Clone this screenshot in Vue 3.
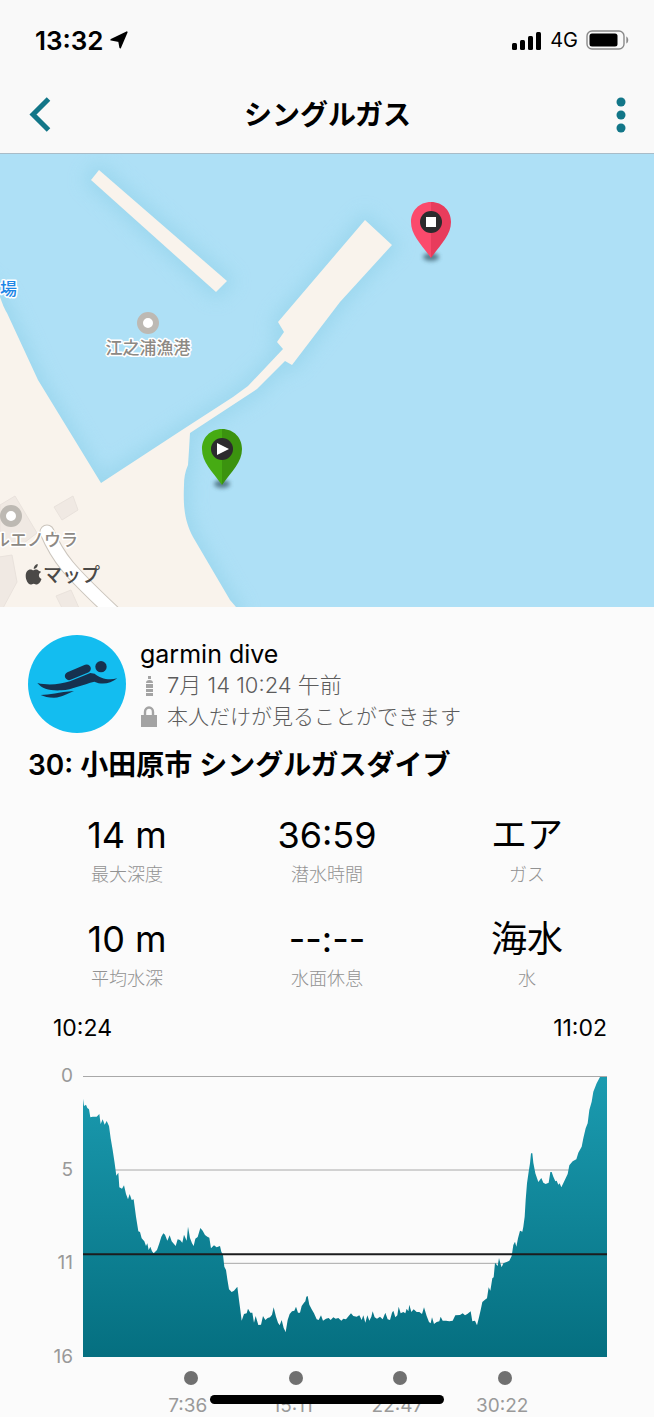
<script setup>
const stats = [
  { value: '14 m', label: '最大深度' },
  { value: '36:59', label: '潜水時間' },
  { value: 'エア', label: 'ガス' },
  { value: '10 m', label: '平均水深' },
  { value: '--:--', label: '水面休息' },
  { value: '海水', label: '水' },
]

const depthTicks = ['0', '5', '11', '16']
const timeTicks = ['7:36', '15:11', '22:47', '30:22']

const pins = [
  { id: 'end', x: 431, y: 222, light: '#fb4a6c', dark: '#e83c5c' },
  { id: 'start', x: 222, y: 449, light: '#46ab13', dark: '#3b930f' },
]

// Depth profile, surface at 0 and the 16 m line at 843.
const profile = `0,68 3,90 9,86 13,96 18,100 22,124 29,122 41,122 49,114 53,144 59,130 65,146 71,135 78,150 83,187
89,222 95,262 100,299 106,290 109,334 117,338 123,328 129,354 135,370 140,354 146,372 152,370 159,422 166,466
171,468 176,487 184,496 189,510 193,502 197,522 202,512 207,526 212,532 222,522 229,502 235,482 241,472 246,476
253,494 260,478 266,496 273,504 278,510 284,490 291,492 298,500 303,476 311,494 315,452 321,486 327,502 332,510
337,488 344,483 352,456 359,464 366,477 373,482 379,485 384,517 393,508 401,514 411,510 415,527 420,537 424,572
429,582 433,610 438,640 446,648 453,644 463,632 468,672 472,702 476,734 483,714 491,712 495,698 502,710 508,710
513,740 518,720 526,747 534,746 540,720 547,732 554,726 561,724 567,716 572,694 579,722 585,740 590,748 596,732
602,756 608,768 614,732 620,714 627,706 634,704 639,692 645,710 651,710 656,690 663,680 667,676 670,662 674,660
679,686 686,700 693,712 701,730 707,732 714,718 720,734 729,728 737,726 743,732 751,724 758,728 766,726 775,734
781,728 789,730 797,720 804,712 811,720 821,722 829,718 836,732 841,718 847,740 853,718 859,734 865,722 869,706
875,724 882,728 891,722 899,730 907,710 914,730 921,732 927,710 931,704 937,724 943,718 947,692 953,712 961,708
967,712 971,698 976,706 979,686 985,708 992,700 1001,708 1009,708 1017,714 1023,694 1031,720 1038,738 1043,742
1047,724 1053,744 1061,738 1069,736 1073,722 1079,734 1089,734 1099,736 1109,734 1117,718 1131,717 1139,712
1146,718 1153,714 1163,706 1168,736 1176,734 1182,748 1188,724 1193,702 1198,678 1205,672 1212,667 1217,634
1222,644 1228,607 1232,604 1236,560 1244,570 1248,546 1252,562 1256,574 1261,562 1271,558 1279,554 1286,540
1291,507 1296,497 1300,512 1305,487 1311,464 1318,467 1321,452 1325,422 1328,372 1332,322 1337,287 1341,262
1344,232 1348,232 1351,260 1357,292 1366,318 1375,306 1381,320 1388,324 1397,320 1402,288 1406,288 1411,302
1417,316 1421,314 1426,326 1430,322 1435,334 1443,317 1454,294 1459,268 1469,256 1480,250 1486,230 1496,212
1501,187 1508,157 1514,142 1519,102 1526,77 1531,47 1541,22 1551,3 1572,3 1572,843 0,843`
</script>

<template>
  <div class="screen">
    <header class="top">
      <div class="status">
        <span class="clock">13:32</span>
        <svg class="locate" viewBox="0 0 18 18" aria-hidden="true"><path d="M1.200 8.800 16.800 1.200 10.200 16.600 9 10.200Z" stroke="#000" stroke-width="1.600" stroke-linejoin="round" /></svg>
        <div class="radio">
          <svg class="signal" viewBox="0 0 30 19" aria-hidden="true">
            <rect x="0" y="12" width="5" height="7" rx="1.5" />
            <rect x="8" y="9" width="5" height="10" rx="1.5" />
            <rect x="16" y="5" width="5" height="14" rx="1.5" />
            <rect x="24" y="1" width="5" height="18" rx="1.5" />
          </svg>
          <span class="network">4G</span>
          <svg class="battery" viewBox="0 0 43 20" aria-hidden="true">
            <rect x="1" y="1" width="37" height="18" rx="5" fill="none" stroke="#8a8a8a" stroke-width="1.4" />
            <rect x="3.5" y="3.5" width="28" height="13" rx="2.5" />
            <path d="M40.3 6.5c2.6 1 2.6 6 0 7z" fill="#8a8a8a" />
          </svg>
        </div>
      </div>
      <nav class="bar">
        <button class="back" type="button" aria-label="戻る">
          <svg viewBox="0 0 22 36"><path d="M19.5 2 4 17.6 19.5 33" fill="none" stroke="#127688" stroke-width="5" /></svg>
        </button>
        <h1>シングルガス</h1>
        <button class="more" type="button" aria-label="メニュー">
          <svg viewBox="0 0 10 36" fill="#127688"><circle cx="5" cy="5" r="4.5" /><circle cx="5" cy="18" r="4.5" /><circle cx="5" cy="31" r="4.5" /></svg>
        </button>
      </nav>
    </header>

    <svg class="map" viewBox="0 154 654 453" preserveAspectRatio="xMidYMid slice" role="img" aria-label="マップ">
      <defs>
        <filter id="shore" x="-20%" y="-20%" width="140%" height="140%"><feGaussianBlur stdDeviation="9" /></filter>
        <filter id="soft" x="-50%" y="-100%" width="200%" height="300%"><feGaussianBlur stdDeviation="2" /></filter>
        <g id="land">
          <path d="M-20 280 0 297C3 305 4 308 7 313L38 380 101 483 182 430 233 397 248 386 283 349 277 342 284 332 278 322 365 220 392 245 340 302 292 365 285 361 257 389 190 433 189 450 188 465Q184 474 184 485C183 508 185 522 193 537L230 600 236 607 236 630-20 630Z" />
          <path d="M99 170 91 180 216 292 227 281Z" />
        </g>
      </defs>
      <rect x="-400" y="154" width="1500" height="453" fill="#aee0f6" />
      <use href="#land" fill="#98d5ec" stroke="#98d5ec" stroke-width="12" filter="url(#shore)" opacity="0.8" />
      <use href="#land" fill="#f9f3ec" />

      <g fill="#f0e9e3" stroke="#e9e2dc" stroke-width="1">
        <path d="M0 505 15 496 37 533 20 546 0 540Z" />
        <path d="M54 507 73 496 78 510 62 520Z" />
        <path d="M-1 557 12 555 17 582 3 608-1 608Z" />
        <path d="M56 596 71 590 79 608 62 608Z" />
      </g>
      <g fill="none" stroke-linecap="round">
        <path d="M47 532C58 558 68 570 115 614" stroke="#cbc5bd" stroke-width="15" />
        <path d="M47 532C58 558 68 570 115 614" stroke="#fff" stroke-width="13" />
      </g>

      <g class="ring">
        <circle cx="148" cy="323" r="8" />
        <circle cx="11" cy="516" r="8" />
      </g>
      <g class="place">
        <text x="148" y="354" text-anchor="middle">江之浦漁港</text>
        <text x="78" y="546" text-anchor="end">ルエノウラ</text>
        <text class="blue" x="0" y="295">場</text>
      </g>
      <g fill="#4b4947">
        <path d="M39 571c-1.500-1.600-3.300-1.700-4.900-1-.7.300-1.100.3-1.800 0-3.200-1.500-6.600.8-6.600 6 0 3.700 2.400 8.500 4.900 8.500 1.200 0 1.700-.8 3.100-.8s1.800.8 3.100.8c2.300 0 4-3.200 4.700-5.400-3.300-1.500-3.400-5.500-.4-7-.6-.6-1.300-1-2.100-1.100Z" />
        <path d="M33.700 569c-.2-2.700 1.700-4.500 4-5 .3 2.700-1.800 4.700-4 5Z" />
        <text class="credit" x="43" y="582">マップ</text>
      </g>

      <g v-for="pin in pins" :key="pin.id" :transform="`translate(${pin.x} ${pin.y})`">
        <ellipse cx="0" cy="35" rx="8" ry="4" fill="#3f6472" opacity="0.8" filter="url(#soft)" />
        <path :fill="pin.light" d="M0-20C-12-20-20-11-20 0-20 13-10 22 0 36Z" />
        <path :fill="pin.dark" d="M0-20C12-20 20-11 20 0 20 13 10 22 0 36Z" />
        <circle r="11" fill="#2c2b2d" />
        <rect v-if="pin.id === 'end'" x="-5" y="-5" width="10" height="10" fill="#fff" />
        <path v-else d="M-5-6 7 0-5 6Z" fill="#fff" />
      </g>
    </svg>

    <main>
      <section class="profile">
        <svg class="avatar" viewBox="84 60 294 294" aria-hidden="true">
          <circle cx="231" cy="207" r="147" fill="#13bdf0" />
          <g fill="#16314f">
            <path d="M112 204C145 212 180 208 210 199L271 174 284 176C300 190 325 197 352 190 330 207 305 210 283 200 250 208 215 224 185 226 150 228 127 222 112 204Z" />
            <path d="M122 240C150 240 175 231 222 228 203 235 188 247 162 248 145 248 132 245 122 240Z" />
            <path d="M207 183 260 161" stroke="#16314f" stroke-width="25" stroke-linecap="round" />
            <circle cx="303" cy="155" r="17" />
          </g>
        </svg>
        <div class="who">
          <p class="name">garmin dive</p>
          <p class="meta date">
            <svg viewBox="0 0 18 24" fill="#a3a3a3" aria-hidden="true"><path d="M8 2h3v3H8zM6 9q0-3 3.500-3T13 9zM6 10h7v4H6zM6 15h7v3H6zM6 19h7v3H6z" /></svg>
            <span>7月 14 10:24 午前</span>
          </p>
          <p class="meta">
            <svg viewBox="0 0 18 24" aria-hidden="true"><path d="M5 11V7a4 4.500 0 0 1 8 0v4" fill="none" stroke="#a3a3a3" stroke-width="2.400" /><rect x="1" y="10" width="16" height="12" fill="#a3a3a3" /></svg>
            <span>本人だけが見ることができます</span>
          </p>
        </div>
      </section>

      <h2>30: 小田原市 シングルガスダイブ</h2>

      <dl class="stats">
        <div v-for="s in stats" :key="s.label">
          <dd>{{ s.value }}</dd>
          <dt>{{ s.label }}</dt>
        </div>
      </dl>

      <section class="chart">
        <div class="span"><span>10:24</span><span>11:02</span></div>
        <div class="plot">
          <ul class="depths"><li v-for="d in depthTicks" :key="d">{{ d }}</li></ul>
          <svg class="graph" viewBox="0 0 1572 843" preserveAspectRatio="none" role="img" aria-label="深度グラフ">
            <defs>
              <linearGradient id="water" x1="0" y1="0" x2="0" y2="1">
                <stop offset="0" stop-color="#1b9bb0" />
                <stop offset="1" stop-color="#056f80" />
              </linearGradient>
            </defs>
            <path d="M0 1.500H1572M0 282H1572M0 562H1572" class="rule" />
            <polygon :points="profile" fill="url(#water)" />
            <path d="M0 535H1572" class="average" />
          </svg>
          <ul class="times">
            <li v-for="t in timeTicks" :key="t"><i class="dot"></i>{{ t }}</li>
          </ul>
        </div>
      </section>
    </main>
    <div class="home"></div>
  </div>
</template>

<style>
body {
  background: #fbfbfb;
}
</style>

<style scoped>
.screen {
  position: relative;
  overflow: hidden;
  font-family: Inter, "Noto Sans CJK JP", sans-serif;
  color: #000;
  background: #fbfbfb;
}
h1, h2, p, dl, dd, ul {
  margin: 0;
  padding: 0;
  list-style: none;
}
svg {
  display: block;
  flex: none;
}
.top {
  background: #f9f9f9;
  border-bottom: 1px solid #a9bcc8;
}
.status {
  display: flex;
  align-items: center;
  height: 76px;
  padding: 4px 25px 0 35px;
  box-sizing: border-box;
}
.clock {
  font-size: 26px;
  font-weight: 600;
}
.locate {
  width: 18px;
  height: 18px;
  margin-left: 6px;
}
.radio {
  display: flex;
  align-items: center;
  margin-left: auto;
}
.signal {
  width: 30px;
  height: 19px;
}
.network {
  margin: 0 8px;
  font-size: 20px;
}
.battery {
  width: 43px;
  height: 20px;
}
.bar {
  display: flex;
  align-items: center;
  justify-content: space-between;
  height: 77px;
  padding: 0 28px 0 29px;
}
.bar button {
  display: flex;
  width: 24px;
  padding: 0;
  border: 0;
  background: none;
}
.back svg {
  width: 22px;
  height: 36px;
}
.bar .more {
  justify-content: flex-end;
}
.more svg {
  width: 10px;
  height: 36px;
}
h1 {
  font-size: 28px;
  line-height: 40px;
  font-weight: 600;
}
.map {
  width: 100%;
  height: auto;
}
.ring circle {
  fill: #fff;
  stroke: #bdb9b3;
  stroke-width: 6px;
}
.place text {
  font-size: 17px;
  font-weight: 500;
  fill: #8d8984;
  stroke: #fff;
  stroke-width: 3px;
  stroke-linejoin: round;
  paint-order: stroke;
}
.place .blue {
  fill: #1d86e6;
}
.credit {
  font-size: 19px;
  font-weight: 500;
}
.profile {
  display: flex;
  gap: 14px;
  padding: 28px 28px 0;
}
.avatar {
  width: 98px;
  height: 98px;
}
.who {
  padding-top: 3px;
}
.name {
  font-size: 25px;
  line-height: 32px;
}
.meta {
  display: flex;
  align-items: center;
  gap: 9px;
  font-size: 21px;
  font-weight: 300;
  line-height: 31px;
  color: #5c5c5c;
}
.date {
  font-size: 22px;
}
.meta svg {
  width: 18px;
  height: 24px;
}
h2 {
  margin: 12px 28px 0;
  font-size: 28px;
  line-height: 40px;
  font-weight: 600;
}
.stats {
  display: grid;
  grid-template-columns: repeat(3, 1fr);
  row-gap: 24px;
  padding: 24px 27px 0;
  text-align: center;
}
.stats div {
  display: flex;
  flex-direction: column;
}
dd {
  font-size: 36px;
  line-height: 52px;
}
dt {
  font-size: 18px;
  font-weight: 300;
  line-height: 28px;
  color: #929292;
}
.chart {
  padding: 19px 47px 0 0;
}
.span {
  display: flex;
  justify-content: space-between;
  padding-left: 53px;
  font-size: 23px;
  line-height: 32px;
}
.plot {
  display: grid;
  grid-template-columns: 83px 1fr;
  padding-top: 22px;
}
.depths {
  display: flex;
  flex-direction: column;
  justify-content: space-between;
  padding-right: 10px;
  font-size: 19px;
  line-height: 20px;
  text-align: right;
  color: #999;
}
.graph {
  width: 100%;
  height: 281px;
  margin: 10px 0;
}
.rule,
.average {
  fill: none;
  stroke: #a8a8a8;
  stroke-width: 1px;
  vector-effect: non-scaling-stroke;
}
.average {
  stroke: #1c1c1e;
  stroke-width: 2px;
}
.times {
  grid-column: 2;
  display: grid;
  grid-template-columns: repeat(4, 1fr);
  padding: 4px 10% 0;
  font-size: 19px;
  line-height: 22px;
  color: #999;
}
.times li {
  display: flex;
  flex-direction: column;
  align-items: center;
  gap: 10px;
}
.dot {
  width: 14px;
  height: 14px;
  margin-left: 6px;
  border-radius: 50%;
  background: #707070;
}
.home {
  position: absolute;
  left: 50%;
  bottom: 13px;
  width: 234px;
  height: 9px;
  margin-left: -117px;
  border-radius: 5px;
  background: #000;
}
</style>
